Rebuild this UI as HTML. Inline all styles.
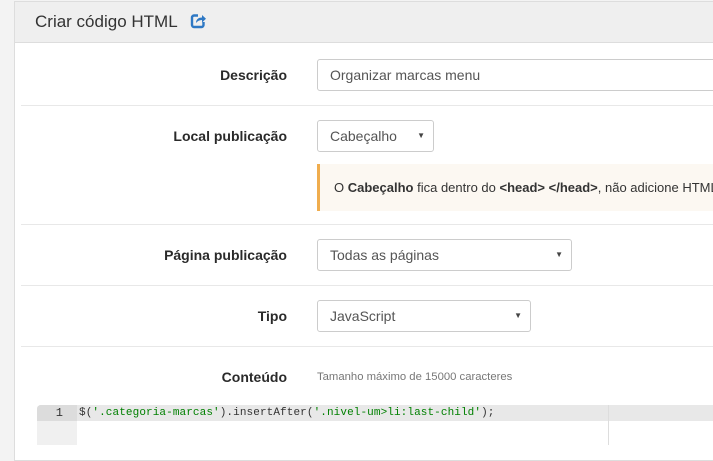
<!DOCTYPE html>
<html><head><meta charset="utf-8"><style>
*{box-sizing:border-box;margin:0;padding:0}
body{width:713px;height:436px;overflow:hidden;background:#f3f3f3;font-family:"Liberation Sans",sans-serif;color:#333;position:relative}
.panel{position:absolute;left:14px;top:1px;width:720px;height:460px;background:#fff;border:1px solid #ddd}
.hdr{position:absolute;left:0;top:0;right:0;height:41px;background:#efefef;border-bottom:1px solid #ddd}
.hdr h1{position:absolute;left:20px;top:10px;font-size:17px;font-weight:normal;color:#333}
.hdr svg{position:absolute;left:175px;top:11px}
.line{position:absolute;left:6px;right:0;height:1px;background:#e8e8e8}
.lbl{position:absolute;right:calc(100% - 272px);font-size:14px;color:#2a2a2a;white-space:nowrap;text-align:right;font-weight:600}
.inp{position:absolute;left:302px;border:1px solid #ccc;border-radius:3px;background:#fff;font-size:14px;color:#555;padding-left:12px;line-height:30px;height:32px}
.sel::after{content:"▼";position:absolute;right:8px;top:0;font-size:8px;color:#444}
.note{position:absolute;left:302px;top:162px;width:420px;height:47px;background:#fcf8f2;border-left:3px solid #f0ad4e;font-size:13px;line-height:47px;padding-left:14px;color:#333;white-space:nowrap}
.hint{position:absolute;left:302px;top:369px;font-size:11.3px;color:#777}
.gut{position:absolute;left:22px;top:403px;width:40px;height:40px;background:#f0f0f0;border-top-left-radius:4px}
.act{position:absolute;left:22px;top:403px;width:700px;height:16px;background:#e8e8e8;border-top-left-radius:4px}
.actg{position:absolute;left:22px;top:403px;width:40px;height:16px;background:#dcdcdc;border-top-left-radius:4px;font-family:"Liberation Mono",monospace;font-size:12px;text-align:right;padding-right:14px;line-height:16px;color:#333}
.code{position:absolute;left:64px;top:403px;font-family:"Liberation Mono",monospace;font-size:11px;line-height:16px;color:#333;letter-spacing:0.1px}
.vl{position:absolute;left:593px;top:403px;width:1px;height:40px;background:#ddd}
</style></head><body>
<div class="panel">
 <div class="hdr"><h1>Criar código HTML</h1>
 <svg width="16" height="16" viewBox="0 0 16 16"><path d="M8 2.5H4a2 2 0 0 0-2 2V12a2 2 0 0 0 2 2h7.5a2 2 0 0 0 2-2V9" fill="none" stroke="#2e78c4" stroke-width="2.4"/><path d="M6 10c0-4 3-5.5 6-5.5V2l4 3.8-4 3.7V7c-2.5 0-4.5 1-6 3z" fill="#2e78c4"/></svg></div>
 <div class="lbl" style="top:65px">Descrição</div>
 <div class="inp" style="top:57px;width:420px">Organizar marcas menu</div>
 <div class="line" style="top:103px"></div>
 <div class="lbl" style="top:126px">Local publicação</div>
 <div class="inp sel" style="top:118px;width:117px">Cabeçalho</div>
 <div class="note">O <b>Cabeçalho</b> fica dentro do <b>&lt;head&gt; &lt;/head&gt;</b>, não adicione HTML</div>
 <div class="line" style="top:222px"></div>
 <div class="lbl" style="top:245px">Página publicação</div>
 <div class="inp sel" style="top:237px;width:255px">Todas as páginas</div>
 <div class="line" style="top:283px"></div>
 <div class="lbl" style="top:306px">Tipo</div>
 <div class="inp sel" style="top:298px;width:214px">JavaScript</div>
 <div class="line" style="top:344px"></div>
 <div class="lbl" style="top:367px">Conteúdo</div>
 <div class="hint">Tamanho máximo de 15000 caracteres</div>
 <div class="gut"></div>
 <div class="act"></div>
 <div class="actg">1</div>
 <div class="vl"></div>
 <div class="code">$(<span style="color:#008000">'.categoria-marcas'</span>).insertAfter(<span style="color:#008000">'.nivel-um&gt;li:last-child'</span>);</div>
</div>
</body></html>
